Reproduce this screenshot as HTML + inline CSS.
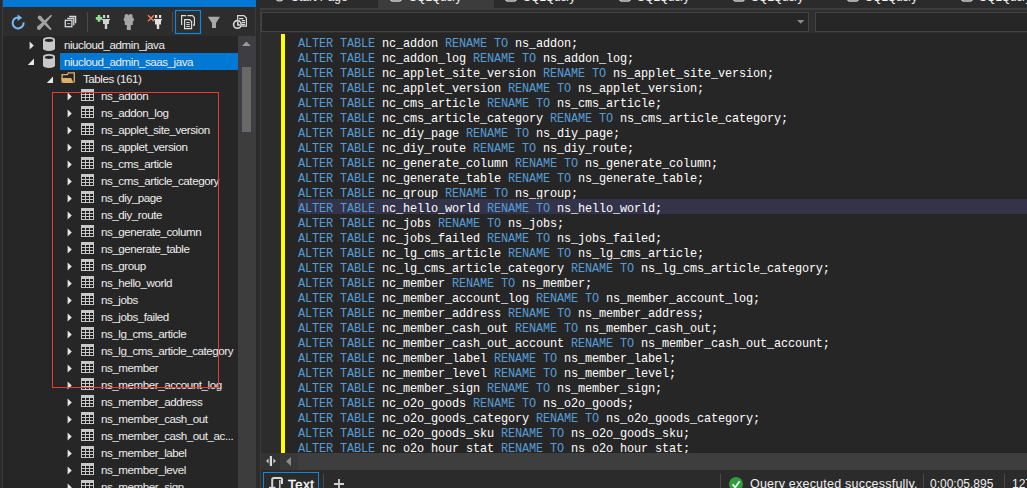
<!DOCTYPE html><html><head><meta charset="utf-8"><style>*{margin:0;padding:0;box-sizing:border-box}
html,body{width:1027px;height:488px;overflow:hidden;background:#2b2b2b;font-family:"Liberation Sans",sans-serif}
.a{position:absolute}
svg{display:block}
#edge{left:0;top:0;width:2px;height:488px;background:#2b2b2b}
#edge2{left:2px;top:0;width:1px;height:488px;background:#3a3a3a}
#bluebar{left:3px;top:0;width:253px;height:7px;background:#0078d4}
#toolbar{left:3px;top:7px;width:253px;height:29px;background:#2d2d2d}
#tree{left:3px;top:36px;width:235px;height:452px;background:#262626;overflow:hidden}
#vscroll{left:238px;top:36px;width:18px;height:452px;background:linear-gradient(#3e3e42 0,#3e3e42 96px,#3d3d3d 96px)}
#vthumb{left:242px;top:67px;width:9px;height:65px;background:#686868}
#split{left:256px;top:0;width:4px;height:488px;background:#2b2b2b}
#right{left:260px;top:0;width:767px;height:488px;background:#2b2b2b}
.row{position:absolute;left:0;height:17px;width:235px;color:#ededed;font-size:11.6px;letter-spacing:-0.45px;line-height:17px;white-space:nowrap}
.row .t{position:absolute;top:0}
.sel{left:57px;top:0;width:178px;height:17px;background:#0078d4}
#redbox{left:49px;top:56px;width:167px;height:296px;border:1px solid #e83a3a}
#editor{left:285px;top:33px;width:742px;height:420px;background:#262626;overflow:hidden}
.cl{position:absolute;left:13px;width:800px;height:15px;padding-top:3px;font-family:"Liberation Mono",monospace;font-size:11.88px;letter-spacing:-0.128px;line-height:15px;white-space:pre;color:#ffffff}
.cl.hl{background:#33334a}
.k{color:#569cd6}
.st{white-space:nowrap;line-height:15px}
.tabt{top:-9.5px;font-size:12px;letter-spacing:-0.6px;line-height:12px;color:#f2f2f2;white-space:nowrap}
</style></head><body><div class="a" id="edge"></div><div class="a" id="edge2"></div><div class="a" id="bluebar"></div><div class="a" id="toolbar"><svg class="a" style="left:-3px;top:-7px" width="256" height="35" viewBox="0 0 256 35">
<!-- refresh -->
<path d="M18.2 17.4 A5.5 5.5 0 1 0 23.6 22.4" fill="none" stroke="#74bcf8" stroke-width="2"/>
<path d="M17.6 14.6 L22.2 17.8 L17.6 21 Z" fill="#74bcf8"/>
<!-- X -->
<path d="M38.21 18.70 L50.34 30.21 L51.66 28.99 L40.99 16.10 A1.9 1.9 0 0 0 38.21 18.70 Z" fill="#a2a2a2"/>
<path d="M37.39 26.59 L51.11 14.71 L52.09 15.69 L40.21 29.41 A2 2 0 0 1 37.39 26.59 Z" fill="#a2a2a2"/>
<!-- collapse -->
<rect x="65.3" y="20.3" width="6.6" height="6.4" fill="none" stroke="#dadada" stroke-width="1.3"/>
<rect x="67.2" y="23" width="3" height="1.2" fill="#74bcf8"/>
<path d="M67.2 18.4 H73.8 V25.2" fill="none" stroke="#dadada" stroke-width="1.3"/>
<path d="M69.2 16.5 H75.6 V23.2" fill="none" stroke="#dadada" stroke-width="1.3"/>
<rect x="87" y="12" width="1" height="20" fill="#4a4a4a"/>
<!-- plug + -->
<path d="M95.8 17.1 H102.2 V19.7 H95.8 Z M97.7 15.1 H100.3 V21.7 H97.7 Z" fill="#90e290"/>
<rect x="103" y="15" width="2.2" height="3" fill="#d2d2d2"/>
<rect x="107" y="15" width="2.2" height="3" fill="#d2d2d2"/>
<path d="M102 19 H110 V20 L109 20.6 V24 H107.2 V29 H104.8 V24 H103 V20.6 L102 20 Z" fill="#d2d2d2"/>
<!-- grey plug -->
<path d="M124.6 18 V15.6 Q124.6 14 126.6 14 Q128.6 14 128.6 15.6 Q128.6 14 130.6 14 Q132.6 14 132.6 15.6 V18 H133.8 V20.8 L132.8 21.4 V25 H130.8 V30 H126.8 V25 H124.8 V21.4 L123.8 20.8 V18 Z" fill="#a6a6a6"/>
<!-- x plug -->
<path d="M148 15.2 L154 21.2 M154 15.2 L148 21.2" stroke="#f08262" stroke-width="1.4"/>
<rect x="155" y="15" width="2.2" height="3" fill="#e2e2e2"/>
<rect x="159" y="15" width="2.2" height="3" fill="#e2e2e2"/>
<path d="M154 19 H162 V20 L161 20.6 V24.4 H159.2 V29 H156.8 V24.4 H155 V20.6 L154 20 Z" fill="#e2e2e2"/>
<rect x="172" y="12" width="1" height="20" fill="#4a4a4a"/>
<!-- copy box -->
<rect x="175.5" y="10.5" width="25" height="23" fill="none" stroke="#0e88de" stroke-width="1.2"/>
<path d="M186.2 15.6 H181.6 V25" fill="none" stroke="#dcdcdc" stroke-width="1.2"/>
<path d="M187.4 15.6 H192.4 L194.4 17.6 V25.2 H193" fill="none" stroke="#dcdcdc" stroke-width="1.2"/>
<path d="M184.6 19.6 H189.6 L191.6 21.6 V28.6 H184.6 Z" fill="#2d2d2d" stroke="#dcdcdc" stroke-width="1.2"/>
<path d="M186.4 22.6 H189.8 M186.4 24.6 H189.8 M186.4 26.6 H189.8" stroke="#dcdcdc" stroke-width="1"/>
<!-- funnel -->
<path d="M207.8 16.8 H220 L216 23 V28 H212 V23 Z" fill="#a8a8a8"/>
<!-- doc clock -->
<path d="M237.6 15.6 H244 L246.4 18 V26.2 H237.6 Z" fill="none" stroke="#dadada" stroke-width="1.2"/>
<path d="M239 18.6 H243.4 M241.8 20.6 H245 M241.8 22.6 H245 M241.8 24.6 H245" stroke="#dadada" stroke-width="1.1"/>
<circle cx="237.4" cy="24.4" r="4.6" fill="#2d2d2d"/>
<circle cx="237.4" cy="24.4" r="3.8" fill="none" stroke="#dadada" stroke-width="1.6"/>
<path d="M237.8 21.8 V24.9 H240.2" fill="none" stroke="#dadada" stroke-width="1.5"/>
<rect x="255" y="7" width="1" height="28" fill="#3a3a3a"/>
</svg>
</div><div class="a" id="tree"><div class="row" style="top:0px"><span class="a" style="left:26px;top:5px"><svg class="tri" width="6" height="10" viewBox="0 0 6 10"><path d="M0.6 0.4 L4.8 4.4 L0.6 8.4 Z" fill="#e6e6e6"/></svg></span><span class="a" style="left:40px;top:1px"><svg class="ico" width="12" height="14" viewBox="0 0 12 14"><path d="M0 2.6 A6 2.6 0 0 1 12 2.6 V11.4 A6 2.6 0 0 1 0 11.4 Z" fill="#c8c8c8"/><ellipse cx="6" cy="3.3" rx="4.2" ry="1.6" fill="#262626"/></svg></span><span class="t" style="left:61px">niucloud_admin_java</span></div><div class="row" style="top:17px"><div class="a sel"></div><span class="a" style="left:24px;top:5px"><svg class="tri" width="8" height="8" viewBox="0 0 8 8"><path d="M7 0.6 L7 7 L0.8 7 Z" fill="#e6e6e6"/></svg></span><span class="a" style="left:40px;top:1px"><svg class="ico" width="12" height="14" viewBox="0 0 12 14"><path d="M0 2.6 A6 2.6 0 0 1 12 2.6 V11.4 A6 2.6 0 0 1 0 11.4 Z" fill="#c8c8c8"/><ellipse cx="6" cy="3.3" rx="4.2" ry="1.6" fill="#262626"/></svg></span><span class="t" style="left:61px">niucloud_admin_saas_java</span></div><div class="row" style="top:34px"><span class="a" style="left:43px;top:6px"><svg class="tri" width="8" height="8" viewBox="0 0 8 8"><path d="M7 0.6 L7 7 L0.8 7 Z" fill="#e6e6e6"/></svg></span><span class="a" style="left:58px;top:2px"><svg class="ico" width="15" height="12" viewBox="0 0 15 12"><path d="M1.1 10.4 V2.6 H6.3 L7.4 0.9 H13.3 V10.4" fill="none" stroke="#dcb06a" stroke-width="1.3"/><path d="M0.3 6 H10.2 L12.6 11 H1.6 Z" fill="#dcb06a"/></svg></span><span class="t" style="left:80px">Tables (161)</span></div><div class="row" style="top:51px"><span class="a" style="left:64px;top:5px"><svg class="tri" width="6" height="10" viewBox="0 0 6 10"><path d="M0.6 0.4 L4.8 4.4 L0.6 8.4 Z" fill="#e6e6e6"/></svg></span><span class="a" style="left:78px;top:2px"><svg class="ico" width="13" height="12" viewBox="0 0 13 12"><rect x="0" y="0" width="13" height="12" fill="#c8c8c8"/><rect x="1" y="3" width="3" height="2" fill="#202020"/><rect x="5" y="3" width="3" height="2" fill="#202020"/><rect x="9" y="3" width="3" height="2" fill="#202020"/><rect x="1" y="6" width="3" height="2" fill="#202020"/><rect x="5" y="6" width="3" height="2" fill="#202020"/><rect x="9" y="6" width="3" height="2" fill="#202020"/><rect x="1" y="9" width="3" height="2" fill="#202020"/><rect x="5" y="9" width="3" height="2" fill="#202020"/><rect x="9" y="9" width="3" height="2" fill="#202020"/></svg></span><span class="t" style="left:98px">ns_addon</span></div><div class="row" style="top:68px"><span class="a" style="left:64px;top:5px"><svg class="tri" width="6" height="10" viewBox="0 0 6 10"><path d="M0.6 0.4 L4.8 4.4 L0.6 8.4 Z" fill="#e6e6e6"/></svg></span><span class="a" style="left:78px;top:2px"><svg class="ico" width="13" height="12" viewBox="0 0 13 12"><rect x="0" y="0" width="13" height="12" fill="#c8c8c8"/><rect x="1" y="3" width="3" height="2" fill="#202020"/><rect x="5" y="3" width="3" height="2" fill="#202020"/><rect x="9" y="3" width="3" height="2" fill="#202020"/><rect x="1" y="6" width="3" height="2" fill="#202020"/><rect x="5" y="6" width="3" height="2" fill="#202020"/><rect x="9" y="6" width="3" height="2" fill="#202020"/><rect x="1" y="9" width="3" height="2" fill="#202020"/><rect x="5" y="9" width="3" height="2" fill="#202020"/><rect x="9" y="9" width="3" height="2" fill="#202020"/></svg></span><span class="t" style="left:98px">ns_addon_log</span></div><div class="row" style="top:85px"><span class="a" style="left:64px;top:5px"><svg class="tri" width="6" height="10" viewBox="0 0 6 10"><path d="M0.6 0.4 L4.8 4.4 L0.6 8.4 Z" fill="#e6e6e6"/></svg></span><span class="a" style="left:78px;top:2px"><svg class="ico" width="13" height="12" viewBox="0 0 13 12"><rect x="0" y="0" width="13" height="12" fill="#c8c8c8"/><rect x="1" y="3" width="3" height="2" fill="#202020"/><rect x="5" y="3" width="3" height="2" fill="#202020"/><rect x="9" y="3" width="3" height="2" fill="#202020"/><rect x="1" y="6" width="3" height="2" fill="#202020"/><rect x="5" y="6" width="3" height="2" fill="#202020"/><rect x="9" y="6" width="3" height="2" fill="#202020"/><rect x="1" y="9" width="3" height="2" fill="#202020"/><rect x="5" y="9" width="3" height="2" fill="#202020"/><rect x="9" y="9" width="3" height="2" fill="#202020"/></svg></span><span class="t" style="left:98px">ns_applet_site_version</span></div><div class="row" style="top:102px"><span class="a" style="left:64px;top:5px"><svg class="tri" width="6" height="10" viewBox="0 0 6 10"><path d="M0.6 0.4 L4.8 4.4 L0.6 8.4 Z" fill="#e6e6e6"/></svg></span><span class="a" style="left:78px;top:2px"><svg class="ico" width="13" height="12" viewBox="0 0 13 12"><rect x="0" y="0" width="13" height="12" fill="#c8c8c8"/><rect x="1" y="3" width="3" height="2" fill="#202020"/><rect x="5" y="3" width="3" height="2" fill="#202020"/><rect x="9" y="3" width="3" height="2" fill="#202020"/><rect x="1" y="6" width="3" height="2" fill="#202020"/><rect x="5" y="6" width="3" height="2" fill="#202020"/><rect x="9" y="6" width="3" height="2" fill="#202020"/><rect x="1" y="9" width="3" height="2" fill="#202020"/><rect x="5" y="9" width="3" height="2" fill="#202020"/><rect x="9" y="9" width="3" height="2" fill="#202020"/></svg></span><span class="t" style="left:98px">ns_applet_version</span></div><div class="row" style="top:119px"><span class="a" style="left:64px;top:5px"><svg class="tri" width="6" height="10" viewBox="0 0 6 10"><path d="M0.6 0.4 L4.8 4.4 L0.6 8.4 Z" fill="#e6e6e6"/></svg></span><span class="a" style="left:78px;top:2px"><svg class="ico" width="13" height="12" viewBox="0 0 13 12"><rect x="0" y="0" width="13" height="12" fill="#c8c8c8"/><rect x="1" y="3" width="3" height="2" fill="#202020"/><rect x="5" y="3" width="3" height="2" fill="#202020"/><rect x="9" y="3" width="3" height="2" fill="#202020"/><rect x="1" y="6" width="3" height="2" fill="#202020"/><rect x="5" y="6" width="3" height="2" fill="#202020"/><rect x="9" y="6" width="3" height="2" fill="#202020"/><rect x="1" y="9" width="3" height="2" fill="#202020"/><rect x="5" y="9" width="3" height="2" fill="#202020"/><rect x="9" y="9" width="3" height="2" fill="#202020"/></svg></span><span class="t" style="left:98px">ns_cms_article</span></div><div class="row" style="top:136px"><span class="a" style="left:64px;top:5px"><svg class="tri" width="6" height="10" viewBox="0 0 6 10"><path d="M0.6 0.4 L4.8 4.4 L0.6 8.4 Z" fill="#e6e6e6"/></svg></span><span class="a" style="left:78px;top:2px"><svg class="ico" width="13" height="12" viewBox="0 0 13 12"><rect x="0" y="0" width="13" height="12" fill="#c8c8c8"/><rect x="1" y="3" width="3" height="2" fill="#202020"/><rect x="5" y="3" width="3" height="2" fill="#202020"/><rect x="9" y="3" width="3" height="2" fill="#202020"/><rect x="1" y="6" width="3" height="2" fill="#202020"/><rect x="5" y="6" width="3" height="2" fill="#202020"/><rect x="9" y="6" width="3" height="2" fill="#202020"/><rect x="1" y="9" width="3" height="2" fill="#202020"/><rect x="5" y="9" width="3" height="2" fill="#202020"/><rect x="9" y="9" width="3" height="2" fill="#202020"/></svg></span><span class="t" style="left:98px">ns_cms_article_category</span></div><div class="row" style="top:153px"><span class="a" style="left:64px;top:5px"><svg class="tri" width="6" height="10" viewBox="0 0 6 10"><path d="M0.6 0.4 L4.8 4.4 L0.6 8.4 Z" fill="#e6e6e6"/></svg></span><span class="a" style="left:78px;top:2px"><svg class="ico" width="13" height="12" viewBox="0 0 13 12"><rect x="0" y="0" width="13" height="12" fill="#c8c8c8"/><rect x="1" y="3" width="3" height="2" fill="#202020"/><rect x="5" y="3" width="3" height="2" fill="#202020"/><rect x="9" y="3" width="3" height="2" fill="#202020"/><rect x="1" y="6" width="3" height="2" fill="#202020"/><rect x="5" y="6" width="3" height="2" fill="#202020"/><rect x="9" y="6" width="3" height="2" fill="#202020"/><rect x="1" y="9" width="3" height="2" fill="#202020"/><rect x="5" y="9" width="3" height="2" fill="#202020"/><rect x="9" y="9" width="3" height="2" fill="#202020"/></svg></span><span class="t" style="left:98px">ns_diy_page</span></div><div class="row" style="top:170px"><span class="a" style="left:64px;top:5px"><svg class="tri" width="6" height="10" viewBox="0 0 6 10"><path d="M0.6 0.4 L4.8 4.4 L0.6 8.4 Z" fill="#e6e6e6"/></svg></span><span class="a" style="left:78px;top:2px"><svg class="ico" width="13" height="12" viewBox="0 0 13 12"><rect x="0" y="0" width="13" height="12" fill="#c8c8c8"/><rect x="1" y="3" width="3" height="2" fill="#202020"/><rect x="5" y="3" width="3" height="2" fill="#202020"/><rect x="9" y="3" width="3" height="2" fill="#202020"/><rect x="1" y="6" width="3" height="2" fill="#202020"/><rect x="5" y="6" width="3" height="2" fill="#202020"/><rect x="9" y="6" width="3" height="2" fill="#202020"/><rect x="1" y="9" width="3" height="2" fill="#202020"/><rect x="5" y="9" width="3" height="2" fill="#202020"/><rect x="9" y="9" width="3" height="2" fill="#202020"/></svg></span><span class="t" style="left:98px">ns_diy_route</span></div><div class="row" style="top:187px"><span class="a" style="left:64px;top:5px"><svg class="tri" width="6" height="10" viewBox="0 0 6 10"><path d="M0.6 0.4 L4.8 4.4 L0.6 8.4 Z" fill="#e6e6e6"/></svg></span><span class="a" style="left:78px;top:2px"><svg class="ico" width="13" height="12" viewBox="0 0 13 12"><rect x="0" y="0" width="13" height="12" fill="#c8c8c8"/><rect x="1" y="3" width="3" height="2" fill="#202020"/><rect x="5" y="3" width="3" height="2" fill="#202020"/><rect x="9" y="3" width="3" height="2" fill="#202020"/><rect x="1" y="6" width="3" height="2" fill="#202020"/><rect x="5" y="6" width="3" height="2" fill="#202020"/><rect x="9" y="6" width="3" height="2" fill="#202020"/><rect x="1" y="9" width="3" height="2" fill="#202020"/><rect x="5" y="9" width="3" height="2" fill="#202020"/><rect x="9" y="9" width="3" height="2" fill="#202020"/></svg></span><span class="t" style="left:98px">ns_generate_column</span></div><div class="row" style="top:204px"><span class="a" style="left:64px;top:5px"><svg class="tri" width="6" height="10" viewBox="0 0 6 10"><path d="M0.6 0.4 L4.8 4.4 L0.6 8.4 Z" fill="#e6e6e6"/></svg></span><span class="a" style="left:78px;top:2px"><svg class="ico" width="13" height="12" viewBox="0 0 13 12"><rect x="0" y="0" width="13" height="12" fill="#c8c8c8"/><rect x="1" y="3" width="3" height="2" fill="#202020"/><rect x="5" y="3" width="3" height="2" fill="#202020"/><rect x="9" y="3" width="3" height="2" fill="#202020"/><rect x="1" y="6" width="3" height="2" fill="#202020"/><rect x="5" y="6" width="3" height="2" fill="#202020"/><rect x="9" y="6" width="3" height="2" fill="#202020"/><rect x="1" y="9" width="3" height="2" fill="#202020"/><rect x="5" y="9" width="3" height="2" fill="#202020"/><rect x="9" y="9" width="3" height="2" fill="#202020"/></svg></span><span class="t" style="left:98px">ns_generate_table</span></div><div class="row" style="top:221px"><span class="a" style="left:64px;top:5px"><svg class="tri" width="6" height="10" viewBox="0 0 6 10"><path d="M0.6 0.4 L4.8 4.4 L0.6 8.4 Z" fill="#e6e6e6"/></svg></span><span class="a" style="left:78px;top:2px"><svg class="ico" width="13" height="12" viewBox="0 0 13 12"><rect x="0" y="0" width="13" height="12" fill="#c8c8c8"/><rect x="1" y="3" width="3" height="2" fill="#202020"/><rect x="5" y="3" width="3" height="2" fill="#202020"/><rect x="9" y="3" width="3" height="2" fill="#202020"/><rect x="1" y="6" width="3" height="2" fill="#202020"/><rect x="5" y="6" width="3" height="2" fill="#202020"/><rect x="9" y="6" width="3" height="2" fill="#202020"/><rect x="1" y="9" width="3" height="2" fill="#202020"/><rect x="5" y="9" width="3" height="2" fill="#202020"/><rect x="9" y="9" width="3" height="2" fill="#202020"/></svg></span><span class="t" style="left:98px">ns_group</span></div><div class="row" style="top:238px"><span class="a" style="left:64px;top:5px"><svg class="tri" width="6" height="10" viewBox="0 0 6 10"><path d="M0.6 0.4 L4.8 4.4 L0.6 8.4 Z" fill="#e6e6e6"/></svg></span><span class="a" style="left:78px;top:2px"><svg class="ico" width="13" height="12" viewBox="0 0 13 12"><rect x="0" y="0" width="13" height="12" fill="#c8c8c8"/><rect x="1" y="3" width="3" height="2" fill="#202020"/><rect x="5" y="3" width="3" height="2" fill="#202020"/><rect x="9" y="3" width="3" height="2" fill="#202020"/><rect x="1" y="6" width="3" height="2" fill="#202020"/><rect x="5" y="6" width="3" height="2" fill="#202020"/><rect x="9" y="6" width="3" height="2" fill="#202020"/><rect x="1" y="9" width="3" height="2" fill="#202020"/><rect x="5" y="9" width="3" height="2" fill="#202020"/><rect x="9" y="9" width="3" height="2" fill="#202020"/></svg></span><span class="t" style="left:98px">ns_hello_world</span></div><div class="row" style="top:255px"><span class="a" style="left:64px;top:5px"><svg class="tri" width="6" height="10" viewBox="0 0 6 10"><path d="M0.6 0.4 L4.8 4.4 L0.6 8.4 Z" fill="#e6e6e6"/></svg></span><span class="a" style="left:78px;top:2px"><svg class="ico" width="13" height="12" viewBox="0 0 13 12"><rect x="0" y="0" width="13" height="12" fill="#c8c8c8"/><rect x="1" y="3" width="3" height="2" fill="#202020"/><rect x="5" y="3" width="3" height="2" fill="#202020"/><rect x="9" y="3" width="3" height="2" fill="#202020"/><rect x="1" y="6" width="3" height="2" fill="#202020"/><rect x="5" y="6" width="3" height="2" fill="#202020"/><rect x="9" y="6" width="3" height="2" fill="#202020"/><rect x="1" y="9" width="3" height="2" fill="#202020"/><rect x="5" y="9" width="3" height="2" fill="#202020"/><rect x="9" y="9" width="3" height="2" fill="#202020"/></svg></span><span class="t" style="left:98px">ns_jobs</span></div><div class="row" style="top:272px"><span class="a" style="left:64px;top:5px"><svg class="tri" width="6" height="10" viewBox="0 0 6 10"><path d="M0.6 0.4 L4.8 4.4 L0.6 8.4 Z" fill="#e6e6e6"/></svg></span><span class="a" style="left:78px;top:2px"><svg class="ico" width="13" height="12" viewBox="0 0 13 12"><rect x="0" y="0" width="13" height="12" fill="#c8c8c8"/><rect x="1" y="3" width="3" height="2" fill="#202020"/><rect x="5" y="3" width="3" height="2" fill="#202020"/><rect x="9" y="3" width="3" height="2" fill="#202020"/><rect x="1" y="6" width="3" height="2" fill="#202020"/><rect x="5" y="6" width="3" height="2" fill="#202020"/><rect x="9" y="6" width="3" height="2" fill="#202020"/><rect x="1" y="9" width="3" height="2" fill="#202020"/><rect x="5" y="9" width="3" height="2" fill="#202020"/><rect x="9" y="9" width="3" height="2" fill="#202020"/></svg></span><span class="t" style="left:98px">ns_jobs_failed</span></div><div class="row" style="top:289px"><span class="a" style="left:64px;top:5px"><svg class="tri" width="6" height="10" viewBox="0 0 6 10"><path d="M0.6 0.4 L4.8 4.4 L0.6 8.4 Z" fill="#e6e6e6"/></svg></span><span class="a" style="left:78px;top:2px"><svg class="ico" width="13" height="12" viewBox="0 0 13 12"><rect x="0" y="0" width="13" height="12" fill="#c8c8c8"/><rect x="1" y="3" width="3" height="2" fill="#202020"/><rect x="5" y="3" width="3" height="2" fill="#202020"/><rect x="9" y="3" width="3" height="2" fill="#202020"/><rect x="1" y="6" width="3" height="2" fill="#202020"/><rect x="5" y="6" width="3" height="2" fill="#202020"/><rect x="9" y="6" width="3" height="2" fill="#202020"/><rect x="1" y="9" width="3" height="2" fill="#202020"/><rect x="5" y="9" width="3" height="2" fill="#202020"/><rect x="9" y="9" width="3" height="2" fill="#202020"/></svg></span><span class="t" style="left:98px">ns_lg_cms_article</span></div><div class="row" style="top:306px"><span class="a" style="left:64px;top:5px"><svg class="tri" width="6" height="10" viewBox="0 0 6 10"><path d="M0.6 0.4 L4.8 4.4 L0.6 8.4 Z" fill="#e6e6e6"/></svg></span><span class="a" style="left:78px;top:2px"><svg class="ico" width="13" height="12" viewBox="0 0 13 12"><rect x="0" y="0" width="13" height="12" fill="#c8c8c8"/><rect x="1" y="3" width="3" height="2" fill="#202020"/><rect x="5" y="3" width="3" height="2" fill="#202020"/><rect x="9" y="3" width="3" height="2" fill="#202020"/><rect x="1" y="6" width="3" height="2" fill="#202020"/><rect x="5" y="6" width="3" height="2" fill="#202020"/><rect x="9" y="6" width="3" height="2" fill="#202020"/><rect x="1" y="9" width="3" height="2" fill="#202020"/><rect x="5" y="9" width="3" height="2" fill="#202020"/><rect x="9" y="9" width="3" height="2" fill="#202020"/></svg></span><span class="t" style="left:98px">ns_lg_cms_article_category</span></div><div class="row" style="top:323px"><span class="a" style="left:64px;top:5px"><svg class="tri" width="6" height="10" viewBox="0 0 6 10"><path d="M0.6 0.4 L4.8 4.4 L0.6 8.4 Z" fill="#e6e6e6"/></svg></span><span class="a" style="left:78px;top:2px"><svg class="ico" width="13" height="12" viewBox="0 0 13 12"><rect x="0" y="0" width="13" height="12" fill="#c8c8c8"/><rect x="1" y="3" width="3" height="2" fill="#202020"/><rect x="5" y="3" width="3" height="2" fill="#202020"/><rect x="9" y="3" width="3" height="2" fill="#202020"/><rect x="1" y="6" width="3" height="2" fill="#202020"/><rect x="5" y="6" width="3" height="2" fill="#202020"/><rect x="9" y="6" width="3" height="2" fill="#202020"/><rect x="1" y="9" width="3" height="2" fill="#202020"/><rect x="5" y="9" width="3" height="2" fill="#202020"/><rect x="9" y="9" width="3" height="2" fill="#202020"/></svg></span><span class="t" style="left:98px">ns_member</span></div><div class="row" style="top:340px"><span class="a" style="left:64px;top:5px"><svg class="tri" width="6" height="10" viewBox="0 0 6 10"><path d="M0.6 0.4 L4.8 4.4 L0.6 8.4 Z" fill="#e6e6e6"/></svg></span><span class="a" style="left:78px;top:2px"><svg class="ico" width="13" height="12" viewBox="0 0 13 12"><rect x="0" y="0" width="13" height="12" fill="#c8c8c8"/><rect x="1" y="3" width="3" height="2" fill="#202020"/><rect x="5" y="3" width="3" height="2" fill="#202020"/><rect x="9" y="3" width="3" height="2" fill="#202020"/><rect x="1" y="6" width="3" height="2" fill="#202020"/><rect x="5" y="6" width="3" height="2" fill="#202020"/><rect x="9" y="6" width="3" height="2" fill="#202020"/><rect x="1" y="9" width="3" height="2" fill="#202020"/><rect x="5" y="9" width="3" height="2" fill="#202020"/><rect x="9" y="9" width="3" height="2" fill="#202020"/></svg></span><span class="t" style="left:98px">ns_member_account_log</span></div><div class="row" style="top:357px"><span class="a" style="left:64px;top:5px"><svg class="tri" width="6" height="10" viewBox="0 0 6 10"><path d="M0.6 0.4 L4.8 4.4 L0.6 8.4 Z" fill="#e6e6e6"/></svg></span><span class="a" style="left:78px;top:2px"><svg class="ico" width="13" height="12" viewBox="0 0 13 12"><rect x="0" y="0" width="13" height="12" fill="#c8c8c8"/><rect x="1" y="3" width="3" height="2" fill="#202020"/><rect x="5" y="3" width="3" height="2" fill="#202020"/><rect x="9" y="3" width="3" height="2" fill="#202020"/><rect x="1" y="6" width="3" height="2" fill="#202020"/><rect x="5" y="6" width="3" height="2" fill="#202020"/><rect x="9" y="6" width="3" height="2" fill="#202020"/><rect x="1" y="9" width="3" height="2" fill="#202020"/><rect x="5" y="9" width="3" height="2" fill="#202020"/><rect x="9" y="9" width="3" height="2" fill="#202020"/></svg></span><span class="t" style="left:98px">ns_member_address</span></div><div class="row" style="top:374px"><span class="a" style="left:64px;top:5px"><svg class="tri" width="6" height="10" viewBox="0 0 6 10"><path d="M0.6 0.4 L4.8 4.4 L0.6 8.4 Z" fill="#e6e6e6"/></svg></span><span class="a" style="left:78px;top:2px"><svg class="ico" width="13" height="12" viewBox="0 0 13 12"><rect x="0" y="0" width="13" height="12" fill="#c8c8c8"/><rect x="1" y="3" width="3" height="2" fill="#202020"/><rect x="5" y="3" width="3" height="2" fill="#202020"/><rect x="9" y="3" width="3" height="2" fill="#202020"/><rect x="1" y="6" width="3" height="2" fill="#202020"/><rect x="5" y="6" width="3" height="2" fill="#202020"/><rect x="9" y="6" width="3" height="2" fill="#202020"/><rect x="1" y="9" width="3" height="2" fill="#202020"/><rect x="5" y="9" width="3" height="2" fill="#202020"/><rect x="9" y="9" width="3" height="2" fill="#202020"/></svg></span><span class="t" style="left:98px">ns_member_cash_out</span></div><div class="row" style="top:391px"><span class="a" style="left:64px;top:5px"><svg class="tri" width="6" height="10" viewBox="0 0 6 10"><path d="M0.6 0.4 L4.8 4.4 L0.6 8.4 Z" fill="#e6e6e6"/></svg></span><span class="a" style="left:78px;top:2px"><svg class="ico" width="13" height="12" viewBox="0 0 13 12"><rect x="0" y="0" width="13" height="12" fill="#c8c8c8"/><rect x="1" y="3" width="3" height="2" fill="#202020"/><rect x="5" y="3" width="3" height="2" fill="#202020"/><rect x="9" y="3" width="3" height="2" fill="#202020"/><rect x="1" y="6" width="3" height="2" fill="#202020"/><rect x="5" y="6" width="3" height="2" fill="#202020"/><rect x="9" y="6" width="3" height="2" fill="#202020"/><rect x="1" y="9" width="3" height="2" fill="#202020"/><rect x="5" y="9" width="3" height="2" fill="#202020"/><rect x="9" y="9" width="3" height="2" fill="#202020"/></svg></span><span class="t" style="left:98px">ns_member_cash_out_ac...</span></div><div class="row" style="top:408px"><span class="a" style="left:64px;top:5px"><svg class="tri" width="6" height="10" viewBox="0 0 6 10"><path d="M0.6 0.4 L4.8 4.4 L0.6 8.4 Z" fill="#e6e6e6"/></svg></span><span class="a" style="left:78px;top:2px"><svg class="ico" width="13" height="12" viewBox="0 0 13 12"><rect x="0" y="0" width="13" height="12" fill="#c8c8c8"/><rect x="1" y="3" width="3" height="2" fill="#202020"/><rect x="5" y="3" width="3" height="2" fill="#202020"/><rect x="9" y="3" width="3" height="2" fill="#202020"/><rect x="1" y="6" width="3" height="2" fill="#202020"/><rect x="5" y="6" width="3" height="2" fill="#202020"/><rect x="9" y="6" width="3" height="2" fill="#202020"/><rect x="1" y="9" width="3" height="2" fill="#202020"/><rect x="5" y="9" width="3" height="2" fill="#202020"/><rect x="9" y="9" width="3" height="2" fill="#202020"/></svg></span><span class="t" style="left:98px">ns_member_label</span></div><div class="row" style="top:425px"><span class="a" style="left:64px;top:5px"><svg class="tri" width="6" height="10" viewBox="0 0 6 10"><path d="M0.6 0.4 L4.8 4.4 L0.6 8.4 Z" fill="#e6e6e6"/></svg></span><span class="a" style="left:78px;top:2px"><svg class="ico" width="13" height="12" viewBox="0 0 13 12"><rect x="0" y="0" width="13" height="12" fill="#c8c8c8"/><rect x="1" y="3" width="3" height="2" fill="#202020"/><rect x="5" y="3" width="3" height="2" fill="#202020"/><rect x="9" y="3" width="3" height="2" fill="#202020"/><rect x="1" y="6" width="3" height="2" fill="#202020"/><rect x="5" y="6" width="3" height="2" fill="#202020"/><rect x="9" y="6" width="3" height="2" fill="#202020"/><rect x="1" y="9" width="3" height="2" fill="#202020"/><rect x="5" y="9" width="3" height="2" fill="#202020"/><rect x="9" y="9" width="3" height="2" fill="#202020"/></svg></span><span class="t" style="left:98px">ns_member_level</span></div><div class="row" style="top:442px"><span class="a" style="left:64px;top:5px"><svg class="tri" width="6" height="10" viewBox="0 0 6 10"><path d="M0.6 0.4 L4.8 4.4 L0.6 8.4 Z" fill="#e6e6e6"/></svg></span><span class="a" style="left:78px;top:2px"><svg class="ico" width="13" height="12" viewBox="0 0 13 12"><rect x="0" y="0" width="13" height="12" fill="#c8c8c8"/><rect x="1" y="3" width="3" height="2" fill="#202020"/><rect x="5" y="3" width="3" height="2" fill="#202020"/><rect x="9" y="3" width="3" height="2" fill="#202020"/><rect x="1" y="6" width="3" height="2" fill="#202020"/><rect x="5" y="6" width="3" height="2" fill="#202020"/><rect x="9" y="6" width="3" height="2" fill="#202020"/><rect x="1" y="9" width="3" height="2" fill="#202020"/><rect x="5" y="9" width="3" height="2" fill="#202020"/><rect x="9" y="9" width="3" height="2" fill="#202020"/></svg></span><span class="t" style="left:98px">ns_member_sign</span></div><div class="a" id="redbox"></div></div><div class="a" id="vscroll"></div><div class="a" id="vthumb"></div><svg class="a" style="left:241px;top:40px" width="12" height="8" viewBox="0 0 12 8"><path d="M1 6 L5.4 1.4 L9.8 6 Z" fill="#9a9a9a"/></svg><div class="a" id="split"></div><div class="a" id="right"></div><div class="a" style="left:256px;top:0;width:122px;height:8px;background:#2b2b2b"></div>
<div class="a" style="left:378px;top:0;width:116px;height:8px;background:#3c3c3c"></div>
<svg class="a" style="left:256px;top:0" width="771" height="8" viewBox="256 0 771 8"><path d="M275.6 -2 A4.2 4.2 0 0 0 283.6 -2" fill="none" stroke="#cfcfcf" stroke-width="1.3"/><path d="M390.7 -3 V-1 Q390.7 1 392.7 1 H399.3 Q401.3 1 401.3 -1 V-3" fill="none" stroke="#cfcfcf" stroke-width="1.3"/><path d="M505.7 -3 V-1 Q505.7 1 507.7 1 H514.3 Q516.3 1 516.3 -1 V-3" fill="none" stroke="#cfcfcf" stroke-width="1.3"/><path d="M619.7 -3 V-1 Q619.7 1 621.7 1 H628.3 Q630.3 1 630.3 -1 V-3" fill="none" stroke="#cfcfcf" stroke-width="1.3"/><path d="M733.7 -3 V-1 Q733.7 1 735.7 1 H742.3 Q744.3 1 744.3 -1 V-3" fill="none" stroke="#cfcfcf" stroke-width="1.3"/><path d="M847.7 -3 V-1 Q847.7 1 849.7 1 H856.3 Q858.3 1 858.3 -1 V-3" fill="none" stroke="#cfcfcf" stroke-width="1.3"/><path d="M961.7 -3 V-1 Q961.7 1 963.7 1 H970.3 Q972.3 1 972.3 -1 V-3" fill="none" stroke="#cfcfcf" stroke-width="1.3"/></svg><div class="a tabt" style="left:291px;letter-spacing:0">Start Page</div><div class="a tabt" style="left:409px">SQLQuery</div><div class="a tabt" style="left:523px">SQLQuery</div><div class="a tabt" style="left:637px">SQLQuery</div><div class="a tabt" style="left:751px">SQLQuery</div><div class="a tabt" style="left:865px">SQLQuery</div><div class="a tabt" style="left:979px">SQLQuery</div><div class="a" style="left:260px;top:8px;width:767px;height:2px;background:#3c3c3c"></div>
<div class="a" style="left:260px;top:8px;width:1px;height:480px;background:#3c3c3c"></div>
<div class="a" style="left:261px;top:10px;width:766px;height:23px;background:#2e2e2e"></div>
<div class="a" style="left:261px;top:12px;width:548px;height:20px;background:#262626;border:1px solid #444"></div>
<svg class="a" style="left:797px;top:20px" width="8" height="4" viewBox="0 0 8 4"><path d="M0 0 H7.4 L3.7 3.8 Z" fill="#8a8a8a"/></svg>
<div class="a" style="left:815px;top:12px;width:230px;height:20px;background:#262626;border:1px solid #444"></div>
<div class="a" style="left:261px;top:33px;width:20px;height:420px;background:#2c2c2c"></div>
<div class="a" style="left:281px;top:34px;width:4px;height:419px;background:#ffff00"></div>
<div class="a" id="editor"><div class="cl" style="top:1px"><span class="k">ALTER TABLE</span> nc_addon <span class="k">RENAME TO</span> ns_addon;</div><div class="cl" style="top:16px"><span class="k">ALTER TABLE</span> nc_addon_log <span class="k">RENAME TO</span> ns_addon_log;</div><div class="cl" style="top:31px"><span class="k">ALTER TABLE</span> nc_applet_site_version <span class="k">RENAME TO</span> ns_applet_site_version;</div><div class="cl" style="top:46px"><span class="k">ALTER TABLE</span> nc_applet_version <span class="k">RENAME TO</span> ns_applet_version;</div><div class="cl" style="top:61px"><span class="k">ALTER TABLE</span> nc_cms_article <span class="k">RENAME TO</span> ns_cms_article;</div><div class="cl" style="top:76px"><span class="k">ALTER TABLE</span> nc_cms_article_category <span class="k">RENAME TO</span> ns_cms_article_category;</div><div class="cl" style="top:91px"><span class="k">ALTER TABLE</span> nc_diy_page <span class="k">RENAME TO</span> ns_diy_page;</div><div class="cl" style="top:106px"><span class="k">ALTER TABLE</span> nc_diy_route <span class="k">RENAME TO</span> ns_diy_route;</div><div class="cl" style="top:121px"><span class="k">ALTER TABLE</span> nc_generate_column <span class="k">RENAME TO</span> ns_generate_column;</div><div class="cl" style="top:136px"><span class="k">ALTER TABLE</span> nc_generate_table <span class="k">RENAME TO</span> ns_generate_table;</div><div class="cl" style="top:151px"><span class="k">ALTER TABLE</span> nc_group <span class="k">RENAME TO</span> ns_group;</div><div class="cl hl" style="top:166px"><span class="k">ALTER TABLE</span> nc_hello_world <span class="k">RENAME TO</span> ns_hello_world;</div><div class="cl" style="top:181px"><span class="k">ALTER TABLE</span> nc_jobs <span class="k">RENAME TO</span> ns_jobs;</div><div class="cl" style="top:196px"><span class="k">ALTER TABLE</span> nc_jobs_failed <span class="k">RENAME TO</span> ns_jobs_failed;</div><div class="cl" style="top:211px"><span class="k">ALTER TABLE</span> nc_lg_cms_article <span class="k">RENAME TO</span> ns_lg_cms_article;</div><div class="cl" style="top:226px"><span class="k">ALTER TABLE</span> nc_lg_cms_article_category <span class="k">RENAME TO</span> ns_lg_cms_article_category;</div><div class="cl" style="top:241px"><span class="k">ALTER TABLE</span> nc_member <span class="k">RENAME TO</span> ns_member;</div><div class="cl" style="top:256px"><span class="k">ALTER TABLE</span> nc_member_account_log <span class="k">RENAME TO</span> ns_member_account_log;</div><div class="cl" style="top:271px"><span class="k">ALTER TABLE</span> nc_member_address <span class="k">RENAME TO</span> ns_member_address;</div><div class="cl" style="top:286px"><span class="k">ALTER TABLE</span> nc_member_cash_out <span class="k">RENAME TO</span> ns_member_cash_out;</div><div class="cl" style="top:301px"><span class="k">ALTER TABLE</span> nc_member_cash_out_account <span class="k">RENAME TO</span> ns_member_cash_out_account;</div><div class="cl" style="top:316px"><span class="k">ALTER TABLE</span> nc_member_label <span class="k">RENAME TO</span> ns_member_label;</div><div class="cl" style="top:331px"><span class="k">ALTER TABLE</span> nc_member_level <span class="k">RENAME TO</span> ns_member_level;</div><div class="cl" style="top:346px"><span class="k">ALTER TABLE</span> nc_member_sign <span class="k">RENAME TO</span> ns_member_sign;</div><div class="cl" style="top:361px"><span class="k">ALTER TABLE</span> nc_o2o_goods <span class="k">RENAME TO</span> ns_o2o_goods;</div><div class="cl" style="top:376px"><span class="k">ALTER TABLE</span> nc_o2o_goods_category <span class="k">RENAME TO</span> ns_o2o_goods_category;</div><div class="cl" style="top:391px"><span class="k">ALTER TABLE</span> nc_o2o_goods_sku <span class="k">RENAME TO</span> ns_o2o_goods_sku;</div><div class="cl" style="top:406px"><span class="k">ALTER TABLE</span> nc_o2o_hour_stat <span class="k">RENAME TO</span> ns_o2o_hour_stat;</div></div><div class="a" style="left:261px;top:453px;width:766px;height:17px;background:#3e3e3e"></div>
<div class="a" style="left:261px;top:453px;width:19px;height:17px;background:#333333"></div>
<div class="a" style="left:280px;top:453px;width:18px;height:17px;background:#393939"></div>
<svg class="a" style="left:261px;top:453px" width="37" height="17" viewBox="0 0 37 17">
<path d="M5 8 L7.6 5.4 V10.6 Z M15 8 L12.4 5.4 V10.6 Z" fill="#c8c8c8"/>
<rect x="8.8" y="3" width="2.2" height="10" fill="#dcdcdc"/>
<path d="M30 4 L25 8.5 L30 13 Z" fill="#8a8a8a"/>
</svg>
<div class="a" style="left:261px;top:470px;width:766px;height:18px;background:#2b2b2b"></div>
<div class="a" style="left:263px;top:472px;width:56px;height:20px;border:1px solid #0e88de;background:#2b2b2b"></div>
<svg class="a" style="left:266px;top:474px" width="20" height="14" viewBox="0 0 20 14">
<path d="M6.2 14 V5.6 Q6.2 4 7.8 4 H14.6 Q16 4 16 5.6 V10" fill="none" stroke="#d6d6d6" stroke-width="2"/>
<path d="M13.8 6 V14" stroke="#d6d6d6" stroke-width="1.4"/>
<path d="M3 13.4 H9.5" stroke="#d6d6d6" stroke-width="1.2"/>
</svg>
<div class="a st" style="left:288px;top:477px;font-size:13px;letter-spacing:0.7px;-webkit-text-stroke:0.35px #fff;color:#ffffff">Text</div>
<div class="a" style="left:323px;top:474px;width:1px;height:14px;background:#4a4a4a"></div>
<svg class="a" style="left:333px;top:478px" width="12" height="12" viewBox="0 0 12 12"><path d="M6 1 V12 M1 6 H11" stroke="#d0d0d0" stroke-width="1.8"/></svg>
<div class="a" style="left:720px;top:474px;width:1px;height:14px;background:#4a4a4a"></div>
<svg class="a" style="left:729px;top:477px" width="15" height="15" viewBox="0 0 15 15"><circle cx="7" cy="7" r="7" fill="#2f9d3c"/><path d="M3.6 7.4 L6.2 10.4 L10.6 4.2" fill="none" stroke="#ffffff" stroke-width="1.8"/></svg>
<div class="a st" style="left:750px;top:477px;font-size:12.5px;letter-spacing:0.22px;color:#f0f0f0">Query executed successfully.</div>
<div class="a" style="left:923px;top:474px;width:1px;height:14px;background:#4a4a4a"></div>
<div class="a st" style="left:930px;top:477px;font-size:12px;color:#f0f0f0">0:00:05.895</div>
<div class="a" style="left:1004px;top:474px;width:1px;height:14px;background:#4a4a4a"></div>
<div class="a st" style="left:1012px;top:477px;font-size:12px;color:#f0f0f0">127</div>
</body></html>
